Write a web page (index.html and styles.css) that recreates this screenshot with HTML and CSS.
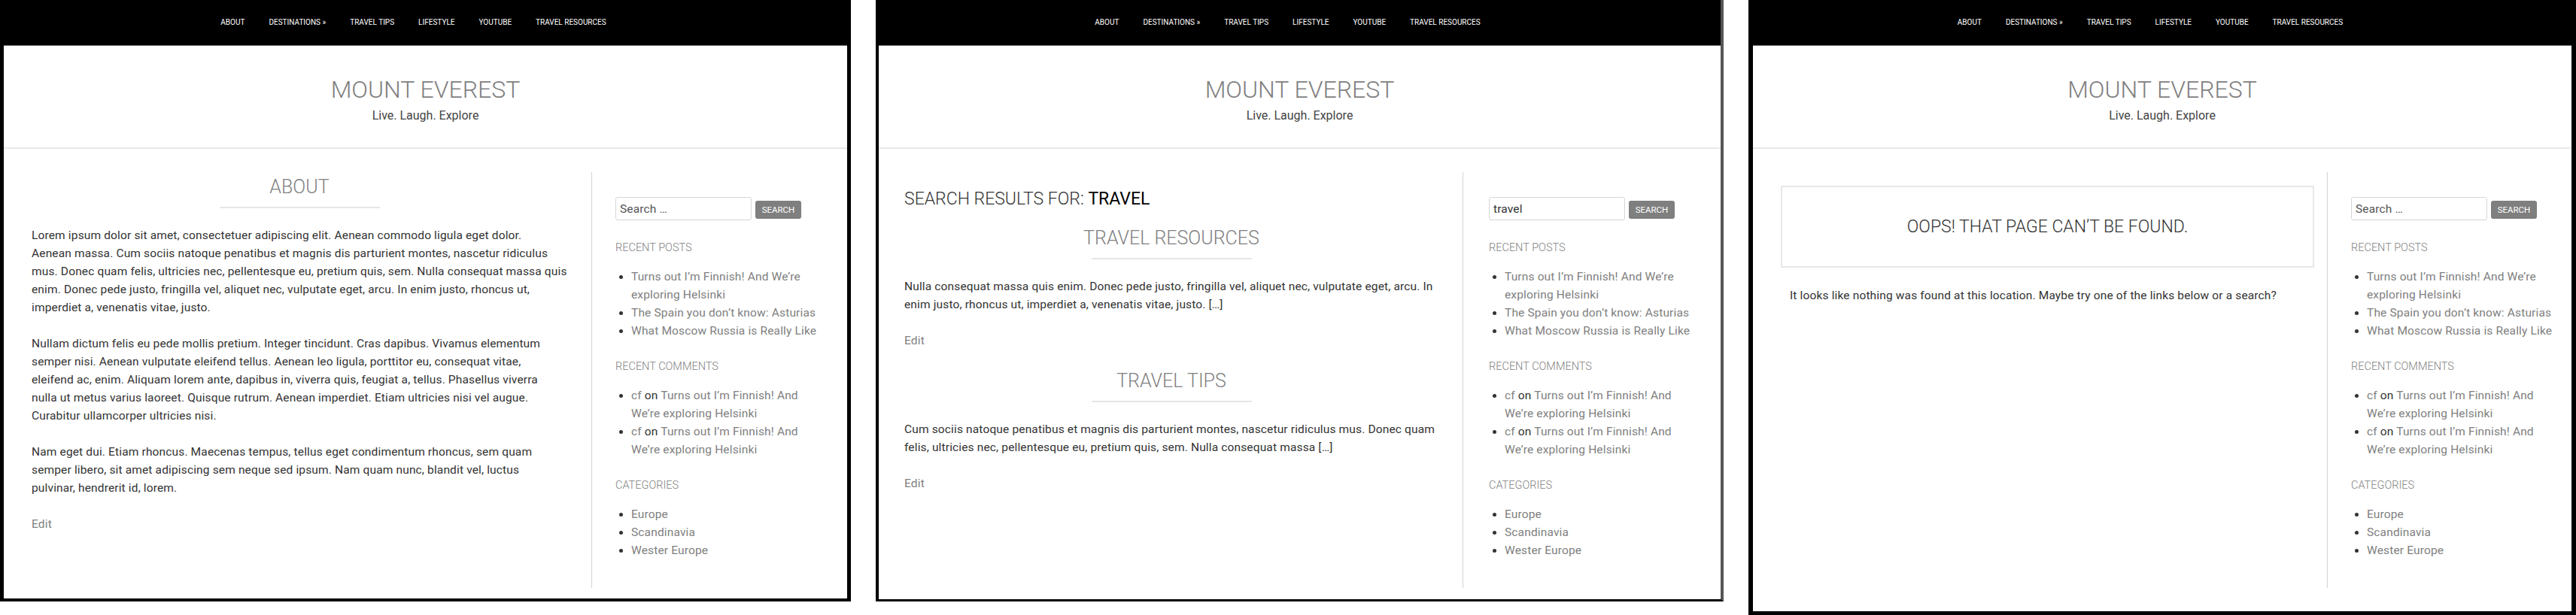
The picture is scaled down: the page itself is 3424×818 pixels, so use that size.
FILE: index.html
```html
<!DOCTYPE html>
<html lang="en">
<head>
<meta charset="utf-8">
<title>Mount Everest</title>
<link rel="stylesheet" href="styles.css">
</head>
<body>
<div class="screens">

  <section class="site p1">
    <nav class="topnav">
      <a href="#">ABOUT</a><a href="#">DESTINATIONS »</a><a href="#">TRAVEL TIPS</a><a href="#">LIFESTYLE</a><a href="#">YOUTUBE</a><a href="#">TRAVEL RESOURCES</a>
    </nav>
    <header class="masthead">
      <h1 class="site-title">MOUNT EVEREST</h1>
      <p class="tagline">Live. Laugh. Explore</p>
    </header>
    <div class="content">
      <main class="main main-page">
        <article class="entry">
          <h2 class="entry-title">ABOUT</h2>
          <p>Lorem ipsum dolor sit amet, consectetuer adipiscing elit. Aenean commodo ligula eget dolor.<br>Aenean massa. Cum sociis natoque penatibus et magnis dis parturient montes, nascetur ridiculus<br>mus. Donec quam felis, ultricies nec, pellentesque eu, pretium quis, sem. Nulla consequat massa quis<br>enim. Donec pede justo, fringilla vel, aliquet nec, vulputate eget, arcu. In enim justo, rhoncus ut,<br>imperdiet a, venenatis vitae, justo.</p>
          <p>Nullam dictum felis eu pede mollis pretium. Integer tincidunt. Cras dapibus. Vivamus elementum<br>semper nisi. Aenean vulputate eleifend tellus. Aenean leo ligula, porttitor eu, consequat vitae,<br>eleifend ac, enim. Aliquam lorem ante, dapibus in, viverra quis, feugiat a, tellus. Phasellus viverra<br>nulla ut metus varius laoreet. Quisque rutrum. Aenean imperdiet. Etiam ultricies nisi vel augue.<br>Curabitur ullamcorper ultricies nisi.</p>
          <p>Nam eget dui. Etiam rhoncus. Maecenas tempus, tellus eget condimentum rhoncus, sem quam<br>semper libero, sit amet adipiscing sem neque sed ipsum. Nam quam nunc, blandit vel, luctus<br>pulvinar, hendrerit id, lorem.</p>
          <a class="edit" href="#">Edit</a>
        </article>
      </main>
      <aside class="sidebar">
        <form class="search-form">
          <input class="search-field" type="search" placeholder="Search …">
          <button class="search-submit" type="button">SEARCH</button>
        </form>
        <h3 class="widget-title">RECENT POSTS</h3>
        <ul class="widget-list">
          <li><a href="#">Turns out I’m Finnish! And We’re<br>exploring Helsinki</a></li>
          <li><a href="#">The Spain you don’t know: Asturias</a></li>
          <li><a href="#">What Moscow Russia is Really Like</a></li>
        </ul>
        <h3 class="widget-title">RECENT COMMENTS</h3>
        <ul class="widget-list">
          <li><a href="#">cf</a> on <a href="#">Turns out I’m Finnish! And<br>We’re exploring Helsinki</a></li>
          <li><a href="#">cf</a> on <a href="#">Turns out I’m Finnish! And<br>We’re exploring Helsinki</a></li>
        </ul>
        <h3 class="widget-title">CATEGORIES</h3>
        <ul class="widget-list">
          <li><a href="#">Europe</a></li>
          <li><a href="#">Scandinavia</a></li>
          <li><a href="#">Wester Europe</a></li>
        </ul>
      </aside>
    </div>
  </section>

  <section class="site p2">
    <nav class="topnav">
      <a href="#">ABOUT</a><a href="#">DESTINATIONS »</a><a href="#">TRAVEL TIPS</a><a href="#">LIFESTYLE</a><a href="#">YOUTUBE</a><a href="#">TRAVEL RESOURCES</a>
    </nav>
    <header class="masthead">
      <h1 class="site-title">MOUNT EVEREST</h1>
      <p class="tagline">Live. Laugh. Explore</p>
    </header>
    <div class="content">
      <main class="main main-search">
        <h2 class="search-title">SEARCH RESULTS FOR: <span class="term">TRAVEL</span></h2>
        <article class="entry">
          <h2 class="entry-title">TRAVEL RESOURCES</h2>
          <p>Nulla consequat massa quis enim. Donec pede justo, fringilla vel, aliquet nec, vulputate eget, arcu. In<br>enim justo, rhoncus ut, imperdiet a, venenatis vitae, justo. […]</p>
          <a class="edit" href="#">Edit</a>
        </article>
        <article class="entry">
          <h2 class="entry-title">TRAVEL TIPS</h2>
          <p>Cum sociis natoque penatibus et magnis dis parturient montes, nascetur ridiculus mus. Donec quam<br>felis, ultricies nec, pellentesque eu, pretium quis, sem. Nulla consequat massa […]</p>
          <a class="edit" href="#">Edit</a>
        </article>
      </main>
      <aside class="sidebar">
        <form class="search-form">
          <input class="search-field" type="search" value="travel">
          <button class="search-submit" type="button">SEARCH</button>
        </form>
        <h3 class="widget-title">RECENT POSTS</h3>
        <ul class="widget-list">
          <li><a href="#">Turns out I’m Finnish! And We’re<br>exploring Helsinki</a></li>
          <li><a href="#">The Spain you don’t know: Asturias</a></li>
          <li><a href="#">What Moscow Russia is Really Like</a></li>
        </ul>
        <h3 class="widget-title">RECENT COMMENTS</h3>
        <ul class="widget-list">
          <li><a href="#">cf</a> on <a href="#">Turns out I’m Finnish! And<br>We’re exploring Helsinki</a></li>
          <li><a href="#">cf</a> on <a href="#">Turns out I’m Finnish! And<br>We’re exploring Helsinki</a></li>
        </ul>
        <h3 class="widget-title">CATEGORIES</h3>
        <ul class="widget-list">
          <li><a href="#">Europe</a></li>
          <li><a href="#">Scandinavia</a></li>
          <li><a href="#">Wester Europe</a></li>
        </ul>
      </aside>
    </div>
  </section>

  <section class="site p3">
    <nav class="topnav">
      <a href="#">ABOUT</a><a href="#">DESTINATIONS »</a><a href="#">TRAVEL TIPS</a><a href="#">LIFESTYLE</a><a href="#">YOUTUBE</a><a href="#">TRAVEL RESOURCES</a>
    </nav>
    <header class="masthead">
      <h1 class="site-title">MOUNT EVEREST</h1>
      <p class="tagline">Live. Laugh. Explore</p>
    </header>
    <div class="content">
      <main class="main main-404">
        <div class="notfound">
          <h2 class="notfound-title">OOPS! THAT PAGE CAN’T BE FOUND.</h2>
        </div>
        <p class="notfound-text">It looks like nothing was found at this location. Maybe try one of the links below or a search?</p>
      </main>
      <aside class="sidebar">
        <form class="search-form">
          <input class="search-field" type="search" placeholder="Search …">
          <button class="search-submit" type="button">SEARCH</button>
        </form>
        <h3 class="widget-title">RECENT POSTS</h3>
        <ul class="widget-list">
          <li><a href="#">Turns out I’m Finnish! And We’re<br>exploring Helsinki</a></li>
          <li><a href="#">The Spain you don’t know: Asturias</a></li>
          <li><a href="#">What Moscow Russia is Really Like</a></li>
        </ul>
        <h3 class="widget-title">RECENT COMMENTS</h3>
        <ul class="widget-list">
          <li><a href="#">cf</a> on <a href="#">Turns out I’m Finnish! And<br>We’re exploring Helsinki</a></li>
          <li><a href="#">cf</a> on <a href="#">Turns out I’m Finnish! And<br>We’re exploring Helsinki</a></li>
        </ul>
        <h3 class="widget-title">CATEGORIES</h3>
        <ul class="widget-list">
          <li><a href="#">Europe</a></li>
          <li><a href="#">Scandinavia</a></li>
          <li><a href="#">Wester Europe</a></li>
        </ul>
      </aside>
    </div>
  </section>

</div>
</body>
</html>
```
FILE: styles.css
```css
* { box-sizing: border-box; }

body {
  margin: 0;
  background: #fff;
  font-family: Roboto, "Liberation Sans", Arial, sans-serif;
  color: #333;
}

a { text-decoration: none; }

.screens {
  display: flex;
  align-items: flex-start;
  gap: 33px;
}

.site {
  display: flex;
  flex-direction: column;
  flex-shrink: 0;
  overflow: hidden;
  background: #fff;
  border-style: solid;
  border-color: #000;
}

.p1 { width: 1131px; height: 800px; border-width: 0 5px 4px 5px; --pl: 37px; --mw: 712px; --gap: 32px; --sp: 31px; }
.p2 { width: 1127px; height: 800px; border-width: 0 4px 3px 4px; border-right-color: #555; --pl: 34px; --mw: 710px; --gap: 32px; --sp: 34px; }
.p3 { width: 1100px; height: 818px; border-width: 0 6px 5px 6px; --pl: 37px; --mw: 709px; --gap: 17px; --sp: 31px; }

/* top navigation */
.topnav {
  flex-shrink: 0;
  height: 61px;
  background: #000;
  border-bottom: 1px solid #6b6b6b;
  display: flex;
  justify-content: center;
  align-items: center;
}
.topnav a {
  color: #fff;
  font-size: 10px;
  line-height: 14px;
  margin-right: 32px;
  white-space: nowrap;
}

/* header */
.masthead {
  flex-shrink: 0;
  text-align: center;
  padding: 38px 0 31px;
  border-bottom: 2px solid #e8e8e8;
}
.site-title {
  margin: 0;
  font-size: 32px;
  line-height: 40px;
  font-weight: 300;
  color: #808080;
}
.tagline {
  margin: 4px 0 0;
  font-size: 16px;
  line-height: 22px;
  color: #444;
}

/* content */
.content {
  display: flex;
  margin-top: 31px;
  height: 553px;
  padding-left: var(--pl);
}
.main {
  width: var(--mw);
  flex-shrink: 0;
}
.sidebar {
  flex: 1;
  margin-left: var(--gap);
  border-left: 1px solid #d4d4d4;
  padding: 33px 0 0 var(--sp);
}

.main-page { padding-top: 5px; }

.entry-title {
  margin: 0;
  font-size: 25px;
  line-height: 30px;
  font-weight: 300;
  color: #808080;
  text-align: center;
}
.entry-title::after {
  content: "";
  display: block;
  width: 213px;
  height: 2px;
  margin: 11px auto 0;
  background: #e6e6e6;
}
.entry p {
  margin: 24px 0;
  font-size: 15.5px;
  letter-spacing: 0.15px;
  line-height: 24px;
  white-space: nowrap;
  color: #333;
}
.edit {
  display: block;
  font-size: 15.5px;
  letter-spacing: 0.15px;
  line-height: 24px;
  color: #808080;
}

.search-title {
  margin: 21px 0 22px;
  font-size: 23px;
  line-height: 30px;
  font-weight: 300;
  color: #333;
}
.search-title .term {
  font-weight: 400;
  color: #000;
}
.main-search .entry + .entry { margin-top: 27px; }

.notfound {
  margin-top: 18px;
  height: 109px;
  border: 2px solid #e8e8e8;
  display: flex;
  align-items: center;
  justify-content: center;
}
.notfound-title {
  margin: 0;
  font-size: 23px;
  line-height: 30px;
  font-weight: 300;
  color: #333;
}
.notfound-text {
  margin: 25px 0 0;
  padding-left: 12px;
  font-size: 15.5px;
  letter-spacing: 0.15px;
  line-height: 24px;
  color: #333;
}

/* sidebar */
.search-form {
  display: flex;
  align-items: center;
  height: 31px;
}
.search-field {
  width: 181px;
  height: 31px;
  margin: 0;
  padding: 0 5px;
  border: 1px solid #d6d6d6;
  border-radius: 3px;
  font-family: inherit;
  font-size: 15.5px;
  letter-spacing: 0.15px;
  color: #333;
  background: #fff;
}
.search-field::placeholder { color: #555; }
.search-submit {
  width: 61px;
  height: 24px;
  margin: 2px 0 0 5px;
  padding: 0;
  border: 0;
  border-radius: 3px;
  background: #7f7f7f;
  color: #fff;
  font-family: inherit;
  font-size: 11.5px;
  line-height: 24px;
}

.widget-title {
  margin: 25px 0 0;
  font-size: 14.5px;
  line-height: 24px;
  font-weight: 300;
  color: #808080;
}
.widget-list + .widget-title { margin-top: 24px; }
.widget-list {
  margin: 14px 0 0;
  padding-left: 21px;
  font-size: 15.5px;
  letter-spacing: 0.15px;
  line-height: 24px;
  color: #333;
}
.widget-list li { white-space: nowrap; }
.widget-list a { color: #808080; }
```
